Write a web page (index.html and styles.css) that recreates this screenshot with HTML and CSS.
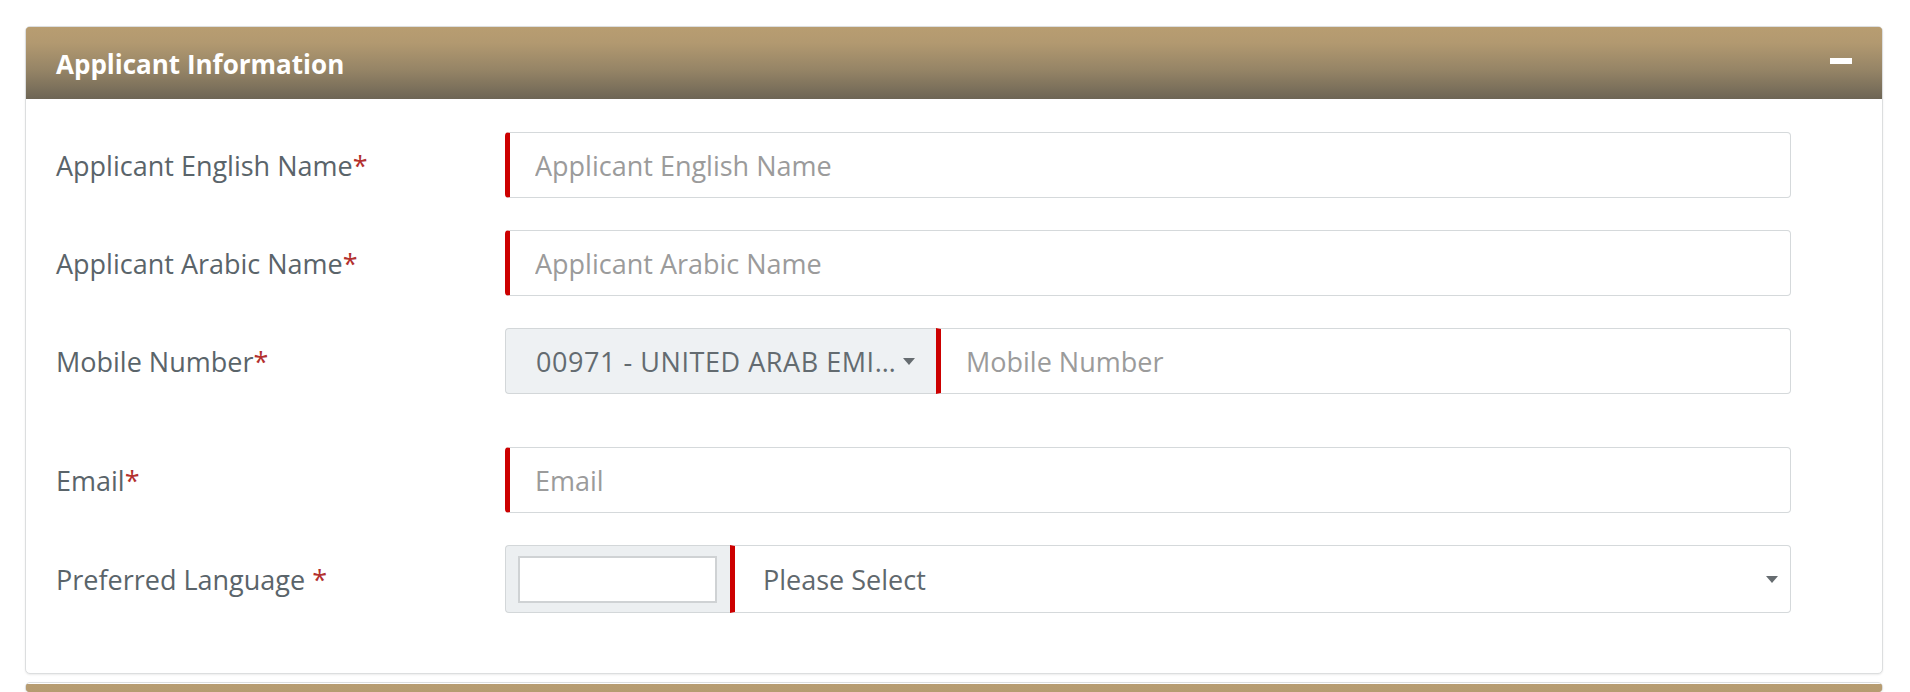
FILE: index.html
```html
<!DOCTYPE html>
<html lang="en">
<head>
<meta charset="utf-8">
<title>Applicant Information</title>
<link rel="stylesheet" href="styles.css">
</head>
<body>
<div class="page">
  <section class="panel">
    <header class="panel-heading">
      <h2 class="panel-title">Applicant Information</h2>
      <span class="collapse-icon" aria-label="Collapse"></span>
    </header>
    <div class="panel-body">
      <div class="form-row">
        <label class="form-label">Applicant English Name<span class="req">*</span></label>
        <div class="form-field">
          <input class="form-control required" type="text" placeholder="Applicant English Name">
        </div>
      </div>
      <div class="form-row">
        <label class="form-label">Applicant Arabic Name<span class="req">*</span></label>
        <div class="form-field">
          <input class="form-control required" type="text" placeholder="Applicant Arabic Name">
        </div>
      </div>
      <div class="form-row spaced">
        <label class="form-label">Mobile Number<span class="req">*</span></label>
        <div class="form-field">
          <div class="code-select">
            <span class="code-text">00971 - UNITED ARAB EMI…</span>
            <span class="caret"></span>
          </div>
          <input class="form-control required joined" type="text" placeholder="Mobile Number">
        </div>
      </div>
      <div class="form-row">
        <label class="form-label">Email<span class="req">*</span></label>
        <div class="form-field">
          <input class="form-control required" type="text" placeholder="Email">
        </div>
      </div>
      <div class="form-row last">
        <label class="form-label">Preferred Language <span class="req">*</span></label>
        <div class="form-field">
          <div class="addon"><span class="addon-box"></span></div>
          <div class="select-control">
            <span class="select-text">Please Select</span>
            <span class="caret"></span>
          </div>
        </div>
      </div>
    </div>
  </section>
  <section class="panel next">
    <header class="panel-heading"></header>
  </section>
</div>
</body>
</html>
```

FILE: styles.css
```css
html, body {
  margin: 0;
  padding: 0;
  background: #ffffff;
}

body {
  font-family: "Open Sans", "Noto Sans", sans-serif;
  overflow: hidden;
}

.page {
  padding: 26px 27px 0 25px;
}

.panel {
  background: #ffffff;
  border: 1px solid #dcdedf;
  border-radius: 5px;
  box-shadow: 0 1px 2px rgba(0, 0, 0, 0.08);
  overflow: hidden;
  margin-bottom: 8px;
}

.panel-heading {
  height: 72px;
  box-sizing: border-box;
  display: flex;
  align-items: center;
  justify-content: space-between;
  padding: 0 30px;
  background-image: linear-gradient(to bottom, #b89d71 0%, #b29970 22%, #958466 60%, #6d6555 100%);
  background-size: 100% 72px;
  background-repeat: no-repeat;
  background-color: #b89d71;
}

.panel-title {
  margin: 0;
  margin-top: 2px;
  font-size: 26px;
  font-weight: 700;
  color: #ffffff;
  line-height: 1;
}

.collapse-icon {
  display: block;
  width: 22px;
  height: 6px;
  background: #ffffff;
  margin-top: -4px;
}

.panel-body {
  padding: 33px 91px 60px 30px;
}

.form-row {
  display: flex;
  align-items: center;
  height: 66px;
  margin-bottom: 32px;
}

.form-row.spaced {
  margin-bottom: 53px;
}

.form-row.last {
  height: 68px;
  margin-bottom: 0;
}

.form-label {
  width: 449px;
  flex: none;
  font-size: 27px;
  color: #5a646a;
  line-height: 1;
}

.req {
  color: #b3302e;
}

.form-field {
  flex: 1;
  height: 100%;
  display: flex;
  min-width: 0;
}

.form-control {
  box-sizing: border-box;
  width: 100%;
  height: 100%;
  margin: 0;
  border: 1px solid #d5d9db;
  border-radius: 4px;
  padding: 0 24px 0 25px;
  font-family: "Open Sans", "Noto Sans", sans-serif;
  font-size: 27px;
  color: #555555;
  background: #ffffff;
  outline: none;
}

.form-control::placeholder {
  color: #9b9b9b;
  opacity: 1;
}

.form-control.required {
  border-left: 5px solid #cc0000;
}

.form-control.joined {
  flex: 1;
  min-width: 0;
  border-radius: 0 4px 4px 0;
  padding-left: 25px;
}

.code-select {
  box-sizing: border-box;
  width: 431px;
  flex: none;
  height: 100%;
  display: flex;
  align-items: center;
  padding: 0 21px 0 30px;
  background: #eef1f3;
  border: 1px solid #d3d7d9;
  border-right: none;
  border-radius: 4px 0 0 4px;
  color: #636b70;
  font-size: 27px;
}

.code-text {
  flex: 1;
  min-width: 0;
  white-space: nowrap;
  letter-spacing: 0.55px;
}

.caret {
  flex: none;
  width: 0;
  height: 0;
  border-left: 6.5px solid transparent;
  border-right: 6.5px solid transparent;
  border-top: 7px solid #666c70;
  margin-left: 6px;
}

.addon {
  box-sizing: border-box;
  width: 225px;
  flex: none;
  height: 100%;
  display: flex;
  align-items: center;
  padding: 0 13px 0 12px;
  background: #eceff1;
  border: 1px solid #d3d7d9;
  border-right: none;
  border-radius: 4px 0 0 4px;
}

.addon-box {
  display: block;
  box-sizing: border-box;
  width: 100%;
  height: 47px;
  background: #ffffff;
  border: 2px solid #cfd2d4;
}

.select-control {
  box-sizing: border-box;
  flex: 1;
  min-width: 0;
  height: 100%;
  display: flex;
  align-items: center;
  padding: 0 12px 0 28px;
  background: #ffffff;
  border: 1px solid #d5d9db;
  border-left: 5px solid #cc0000;
  border-radius: 0 4px 4px 0;
  color: #5f686d;
  font-size: 27px;
}

.select-text {
  flex: 1;
  min-width: 0;
  white-space: nowrap;
}

.panel.next {
  margin-bottom: 0;
}

.panel.next .panel-heading {
  height: 8px;
  margin-top: 1px;
}
```
